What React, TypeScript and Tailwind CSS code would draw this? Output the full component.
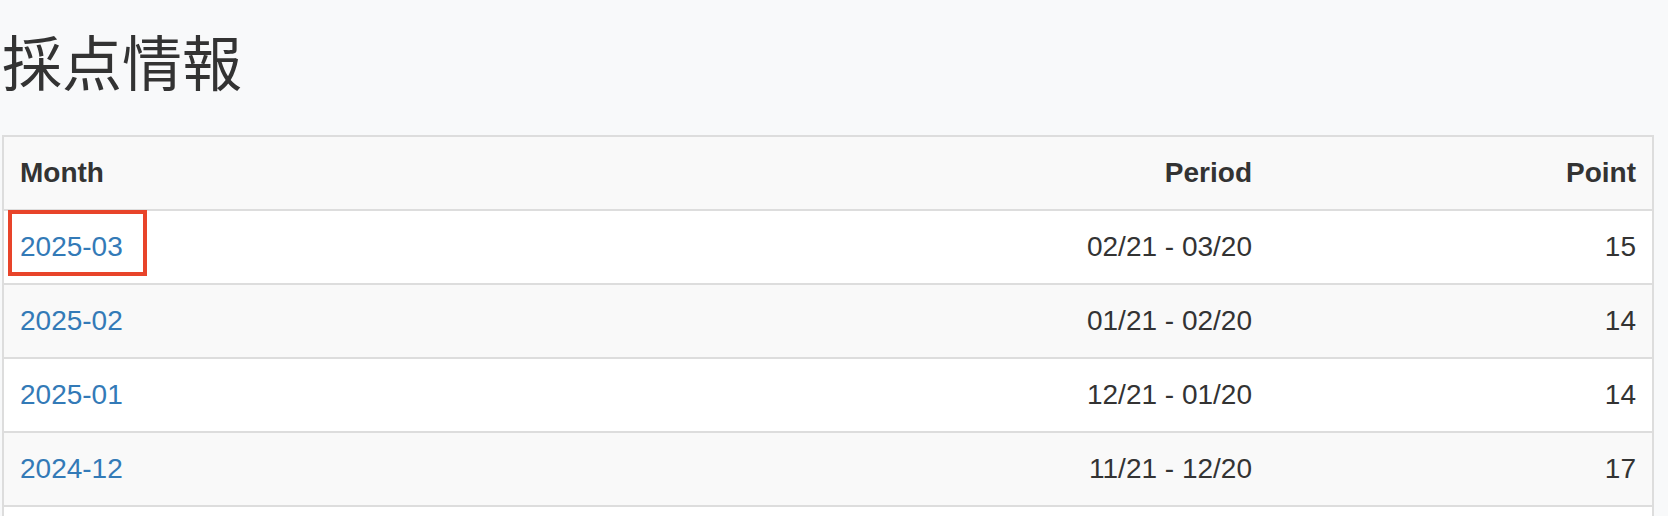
import React from "react";

const rows = [
  { month: "2025-03", period: "02/21 - 03/20", point: 15 },
  { month: "2025-02", period: "01/21 - 02/20", point: 14 },
  { month: "2025-01", period: "12/21 - 01/20", point: 14 },
  { month: "2024-12", period: "11/21 - 12/20", point: 17 },
];

export default function App() {
  return (
    <div
      className="w-[1668px] h-[516px] overflow-hidden bg-[#f8f9fa] text-[#333]"
      style={{ fontFamily: '"Liberation Sans", Arial, "Noto Sans CJK JP", sans-serif' }}
    >
      <h2
        className="pl-[2px] pt-[27px] mb-[42px] text-[60px] leading-[66px] font-normal text-[#333]"
        style={{ fontFamily: '"Noto Sans CJK JP", "Liberation Sans", sans-serif' }}
      >
        採点情報
      </h2>
      <div className="ml-[2px] w-[1652px] h-[400px] border-2 border-b-0 border-[#ddd] bg-white">
        <table className="w-full table-fixed border-collapse text-[28px] leading-[40px]">
          <colgroup>
            <col />
            <col className="w-[600px]" />
            <col className="w-[384px]" />
          </colgroup>
          <thead>
            <tr className="bg-[#f9f9f9] border-b-2 border-[#ddd]">
              <th className="p-4 text-left font-bold">Month</th>
              <th className="p-4 text-right font-bold">Period</th>
              <th className="p-4 text-right font-bold">Point</th>
            </tr>
          </thead>
          <tbody>
            {rows.map((r, i) => (
              <tr
                key={r.month}
                className={`border-b-2 border-[#ddd] ${i % 2 === 1 ? "bg-[#f9f9f9]" : "bg-white"}`}
              >
                <td className="relative p-4 text-left">
                  <a href="#" className="text-[#337ab7] no-underline">
                    {r.month}
                  </a>
                  {i === 0 && (
                    <span className="pointer-events-none absolute left-[4px] top-[-1px] w-[139px] h-[66px] border-4 border-[#e8442a]" />
                  )}
                </td>
                <td className="p-4 text-right">{r.period}</td>
                <td className="p-4 text-right">{r.point}</td>
              </tr>
            ))}
          </tbody>
        </table>
      </div>
    </div>
  );
}
